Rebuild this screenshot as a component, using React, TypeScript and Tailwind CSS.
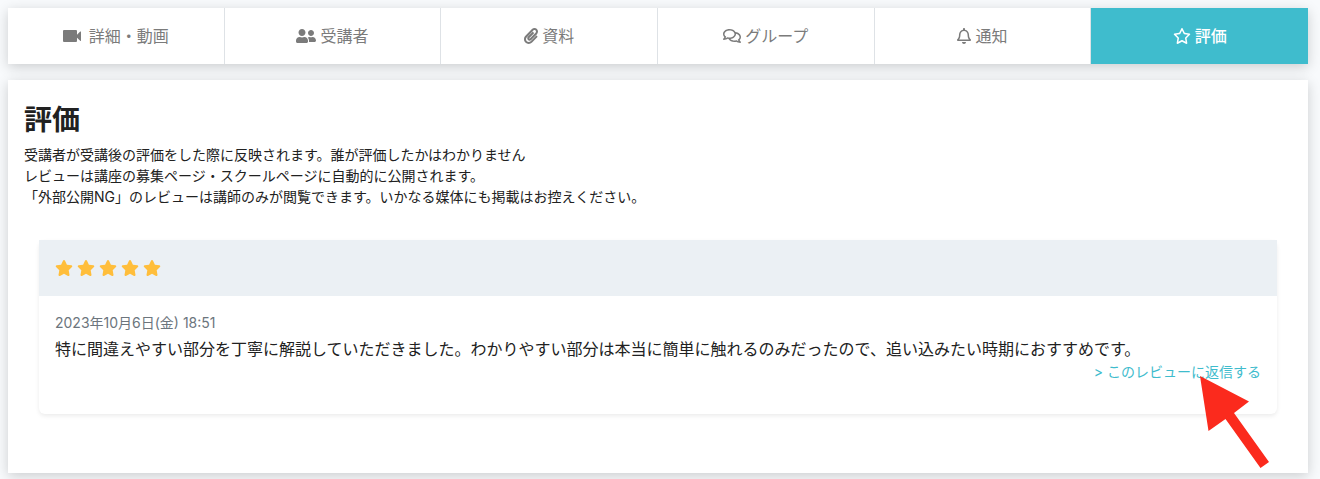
import { FaPaperclip, FaRegBell, FaRegComments, FaUserFriends } from 'react-icons/fa';
import { FaRegStar, FaStar } from 'react-icons/fa6';
import clsx from 'clsx';

function VideoIcon() {
  return (
    <svg viewBox="0 0 18 12" className="mr-1 h-3 w-[18px]" fill="currentColor" aria-hidden="true">
      <rect width="14" height="12" rx="1" />
      <path d="M13.500 5.200 17.200 1.600Q18 1 18 2V10.500Q18 11.500 17.200 10.800L13.500 7.200Z" />
    </svg>
  );
}

const tabs = [
  { label: '詳細・動画', icon: <VideoIcon /> },
  { label: '受講者', icon: <FaUserFriends className="h-4 w-5" /> },
  { label: '資料', icon: <FaPaperclip className="h-4 w-3.5" /> },
  { label: 'グループ', icon: <FaRegComments className="h-4 w-[18px]" /> },
  { label: '通知', icon: <FaRegBell className="h-4 w-3.5" /> },
  { label: '評価', icon: <FaRegStar className="h-4 w-[18px]" />, active: true },
];

function TabBar() {
  return (
    <nav className="grid grid-cols-6 divide-x divide-[#dee2e6] bg-white shadow-[0_3px_12px_rgba(0,0,0,0.18)]">
      {tabs.map((tab) => (
        <a
          key={tab.label}
          href="#"
          aria-current={tab.active ? 'page' : undefined}
          className={clsx(
            'flex h-14 items-center justify-center gap-1 text-base',
            tab.active ? 'bg-[#3fbccd] font-medium text-white' : 'text-[#7b7b7b]'
          )}
        >
          {tab.icon}
          <span>{tab.label}</span>
        </a>
      ))}
    </nav>
  );
}

function Arrow() {
  return (
    <svg
      viewBox="0 0 70 93"
      className="pointer-events-none absolute top-[135px] right-2 h-[93px] w-[70px]"
      aria-hidden="true"
    >
      <path d="M1 1 50 26.500 35 38 70 87 61.500 93 26.500 44 9.500 56Z" fill="#fb2a1d" />
    </svg>
  );
}

function ReviewCard() {
  return (
    <article className="relative rounded-md bg-white shadow-[0_2px_4px_rgba(0,0,0,0.08)]">
      <div className="flex h-14 items-center gap-1 bg-[#ebf0f4] px-4 text-[#ffbe3b]" role="img" aria-label="5">
        {[1, 2, 3, 4, 5].map((n) => (
          <FaStar key={n} className="h-4 w-[18px]" />
        ))}
      </div>
      <div className="px-4 pt-4 pb-8">
        <p className="mb-1 text-sm leading-[21px] text-[#6c757d]">2023年10月6日(金) 18:51</p>
        <p className="text-base leading-6">
          特に間違えやすい部分を丁寧に解説していただきました。わかりやすい部分は本当に簡単に触れるのみだったので、追い込みたい時期におすすめです。
        </p>
        <div className="text-right text-sm leading-[21px]">
          <a href="#" className="text-[#3fbccd]">&gt; このレビューに返信する</a>
        </div>
      </div>
      <Arrow />
    </article>
  );
}

export default function App() {
  return (
    <div className="min-h-screen bg-[#f8fafc] pt-2 pr-3 pb-1.5 pl-2 font-[Inter,'Noto_Sans_CJK_JP',sans-serif] text-[#212121]">
      <TabBar />
      <main className="mt-4 bg-white px-4 pt-6 pb-[59px] shadow-[0_3px_12px_rgba(0,0,0,0.18)]">
        <h1 className="mb-2 text-[28px] leading-8 font-bold">評価</h1>
        <p className="text-sm leading-[21px]">
          受講者が受講後の評価をした際に反映されます。誰が評価したかはわかりません
          <br />
          レビューは講座の募集ページ・スクールページに自動的に公開されます。
          <br />
          「外部公開NG」のレビューは講師のみが閲覧できます。いかなる媒体にも掲載はお控えください。
        </p>
        <div className="mt-[33px] px-[15px]">
          <ReviewCard />
        </div>
      </main>
    </div>
  );
}
